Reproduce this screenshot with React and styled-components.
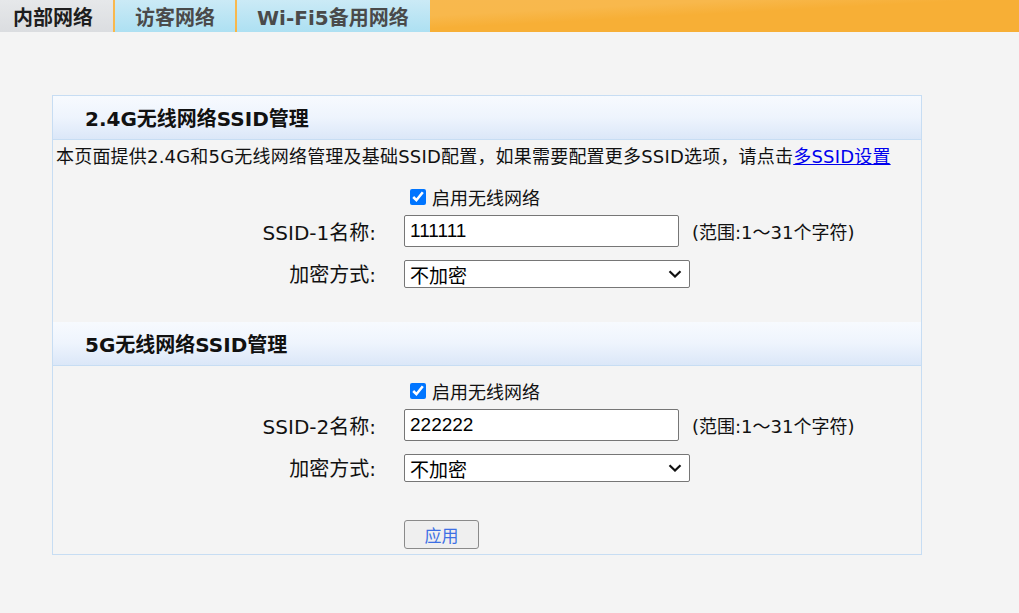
import React from "react";
import styled, { createGlobalStyle } from "styled-components";

const Global = createGlobalStyle`
  html, body { margin: 0; padding: 0; background: #f4f4f4; }
  body { font-family: "DejaVu Sans", "Noto Sans CJK SC", sans-serif; color: #111; }
`;

const Page = styled.div`
  width: 1019px;
  min-height: 613px;
  background: #f4f4f4;
`;

const TabBar = styled.div`
  display: flex;
  height: 32px;
  gap: 2px;
  background: linear-gradient(177deg, #f8b850 0%, #f8b84c 45%, #f7af36 60%, #f7af36 100%);
`;

const Tab = styled.div`
  display: flex;
  align-items: center;
  height: 32px;
  padding: 0 20px 0 ${(p) => (p.$active ? "13px" : "20px")};
  font-size: 20px;
  font-weight: bold;
  font-family: "DejaVu Sans", "Noto Sans CJK SC", sans-serif;
  color: ${(p) => (p.$active ? "#1e1e1e" : "#4a4a4a")};
  background: ${(p) =>
    p.$active
      ? "linear-gradient(#e6e8ea, #dbdde0)"
      : "linear-gradient(#cbeaf6, #ade0f2)"};
  width: ${(p) => p.$w}px;
  box-sizing: border-box;
  white-space: nowrap;
`;

const Panel = styled.div`
  margin: 63px 0 0 52px;
  width: 870px;
  box-sizing: border-box;
  border: 1px solid #c7ddf3;
  padding-bottom: 5px;
`;

const SectionHead = styled.div`
  height: 43px;
  border-bottom: 1px solid #c7ddf3;
  background: linear-gradient(#f7fafe, #eef4fd 50%, #dbe7f8);
  display: flex;
  align-items: center;
  padding-left: 32px;
  font-size: 20px;
  font-weight: bold;
  color: #111;
`;

const Desc = styled.div`
  font-size: 18px;
  line-height: 26px;
  padding: 4px 0 0 3px;
  white-space: nowrap;
  letter-spacing: 0.2px;
`;

const Link = styled.a`
  color: #0000ee;
  text-decoration: underline;
`;

const Form = styled.div`
  display: flex;
  flex-direction: column;
  padding-top: ${(p) => p.$top}px;
  padding-bottom: ${(p) => p.$bottom}px;
`;

const Row = styled.div`
  display: grid;
  grid-template-columns: 323px 1fr;
  column-gap: 28px;
  align-items: center;
  height: ${(p) => p.$h}px;
  margin-bottom: ${(p) => p.$mb || 0}px;
`;

const Label = styled.div`
  text-align: right;
  font-size: 20px;
  white-space: nowrap;
`;

const Field = styled.div`
  display: flex;
  align-items: center;
`;

const Check = styled.input.attrs({ type: "checkbox" })`
  width: 16px;
  height: 16px;
  margin: 0 6px 0 6px;
  accent-color: #0075ff;
`;

const CheckText = styled.span`
  font-size: 18px;
`;

const TextInput = styled.input`
  width: 275px;
  height: 32px;
  box-sizing: border-box;
  border: 1px solid #767676;
  border-radius: 2px;
  background: #fff;
  padding: 0 5px;
  font-family: "Liberation Sans", "Noto Sans CJK SC", sans-serif;
  font-size: 19px;
  color: #000;
  outline: none;
`;

const Hint = styled.span`
  margin-left: 13px;
  font-size: 18px;
  white-space: nowrap;
`;

const SelectWrap = styled.div`
  position: relative;
  width: 286px;
  height: 28px;
`;

const Select = styled.select`
  appearance: none;
  width: 286px;
  height: 28px;
  box-sizing: border-box;
  border: 1px solid #767676;
  border-radius: 2px;
  background: #fff;
  padding: 0 0 0 5px;
  font-family: "Noto Sans CJK SC", sans-serif;
  font-size: 19px;
  color: #000;
  outline: none;
`;

const Chevron = styled.svg`
  position: absolute;
  right: 8px;
  top: 10px;
  pointer-events: none;
`;

const Button = styled.button`
  width: 75px;
  height: 29px;
  border: 1px solid #8a8a8a;
  border-radius: 3px;
  background: #efefef;
  color: #3d6fe4;
  font-family: "Noto Sans CJK SC", sans-serif;
  font-size: 17px;
  padding: 0;
`;

function Section({ title, idx, value, top, bottom, children }) {
  return (
    <>
      <SectionHead>{title}</SectionHead>
      {children}
      <Form $top={top} $bottom={bottom}>
        <Row $h={22} $mb={9}>
          <span />
          <Field>
            <Check defaultChecked />
            <CheckText>启用无线网络</CheckText>
          </Field>
        </Row>
        <Row $h={32} $mb={12}>
          <Label>SSID-{idx}名称:</Label>
          <Field>
            <TextInput defaultValue={value} />
            <Hint>(范围:1～31个字符)</Hint>
          </Field>
        </Row>
        <Row $h={28}>
          <Label>加密方式:</Label>
          <Field>
            <SelectWrap>
              <Select defaultValue="none">
                <option value="none">不加密</option>
              </Select>
              <Chevron width="14" height="8" viewBox="0 0 14 8">
                <path d="M1.5 1.2 L7 6.5 L12.5 1.2" fill="none" stroke="#111" strokeWidth="2.2" />
              </Chevron>
            </SelectWrap>
          </Field>
        </Row>
      </Form>
    </>
  );
}

export default function App() {
  return (
    <Page>
      <Global />
      <TabBar>
        <Tab $active $w={113}>内部网络</Tab>
        <Tab $w={120}>访客网络</Tab>
        <Tab $w={193}>Wi-Fi5备用网络</Tab>
      </TabBar>
      <Panel>
        <Section title="2.4G无线网络SSID管理" idx={1} value="111111" top={14} bottom={35}>
          <Desc>
            本页面提供2.4G和5G无线网络管理及基础SSID配置，如果需要配置更多SSID选项，请点击
            <Link href="#">多SSID设置</Link>
          </Desc>
        </Section>
        <Section title="5G无线网络SSID管理" idx={2} value="222222" top={12} bottom={39} />
        <Form $top={0} $bottom={0}>
          <Row $h={29}>
            <span />
            <Field>
              <Button>应用</Button>
            </Field>
          </Row>
        </Form>
      </Panel>
    </Page>
  );
}
